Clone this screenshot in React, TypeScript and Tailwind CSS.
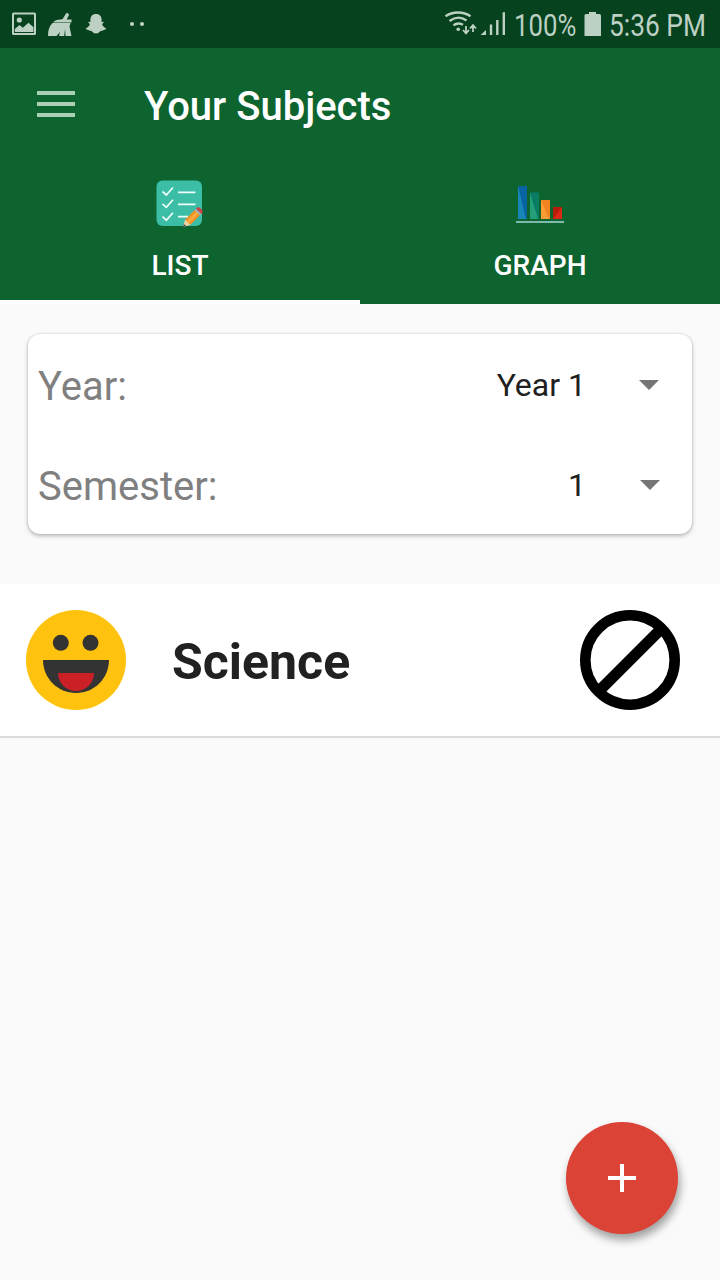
import React from 'react';

function Notifications() {
  return (
    <svg width="160" height="48" viewBox="0 0 160 48" fill="#bcd0c3" aria-hidden="true">
      <path fillRule="evenodd" d="M13.5 12.500h21a1.500 1.500 0 0 1 1.500 1.500v19.500a1.500 1.500 0 0 1-1.500 1.500h-21a1.500 1.500 0 0 1-1.500-1.500V14a1.500 1.500 0 0 1 1.500-1.500ZM14 14.500V33h20V14.500Z" />
      <circle cx="19.300" cy="20" r="2.600" />
      <path d="M14.800 32v-3l4.700-4 3.300 2.700 5.700-5 5 4.500V32Z" />
      <path d="m60.500 19.500 2.200-.5 3-5a1.700 1.700 0 0 1 3 1.600L66.700 19.500h4.800v3H53c1.700-1.800 4-3 7.500-3Z" />
      <path d="M52.500 23h18l-1 3.500 2 9.500h-6l-.5-7-.8 7H59l1-4-3.500 4H48c0-6 1.300-10 4.500-13Z" />
      <path d="M96 14c3.900 0 5.600 2.600 5.600 5.700v2.200l1.700-.2c.8.600.2 1.600-1.300 2.100.5 2 2 3.600 4 4.500.4 1-1.200 1.500-2.600 1.800-.4.900-1.500.6-2.600.8-1.300.2-2.100 2.600-4.800 2.600s-3.500-2.400-4.800-2.600c-1.100-.2-2.200.1-2.600-.8-1.400-.3-3-.8-2.600-1.800 2-.9 3.500-2.500 4-4.500-1.500-.5-2.100-1.500-1.300-2.100l1.700.2v-2.200c0-3.100 1.700-5.700 5.600-5.700Z" />
      <circle cx="132" cy="24" r="2.100" />
      <circle cx="142" cy="24" r="2.100" />
    </svg>
  );
}

function Signals() {
  return (
    <svg width="66" height="48" viewBox="442 0 66 48" fill="none" stroke="#bcd0c3" aria-hidden="true">
      <path d="M445.500 16.300c7-5 18-5 25 0M449.500 21c5.400-4 11.800-4.300 17-.6M453.500 25.300c3-2.200 6.400-2.400 9.500-.5" strokeWidth="2.400" />
      <circle cx="458.200" cy="29.300" r="1.800" fill="#bcd0c3" stroke="none" />
      <path d="M466 26v7m-3-3 3 3.400 3-3.400M473 32v-6.500m-3 3 3-3.400 3 3.400" strokeWidth="1.800" />
      <path d="M486 30v5h-5.500Z" fill="#bcd0c3" stroke="none" />
      <path d="M491 24.500V35M497.300 20V35M503.800 12.300V35" strokeWidth="2.400" />
    </svg>
  );
}

function ListIcon() {
  return (
    <svg width="48" height="48" viewBox="0 0 48 48" aria-hidden="true">
      <rect x="0.500" y="0.500" width="45.500" height="45.500" rx="6" fill="#3cbda6" />
      <path d="m6.500 11.500 3.800 3.500L17 7.500M6.500 23.800l3.800 3.500 6.700-7.500M6.500 36.700l3.800 3.500L17 32.700M22 12.300h17.500M22 24.300h17.500M22 36.700h10" fill="none" stroke="#effffb" strokeWidth="1.700" />
      <path d="m27 47 2.200-7.500 5.300 5.300Z" fill="#f2d2a2" />
      <path d="m27 47 .9-3 2.100 2.100Z" fill="#344451" />
      <path d="m29.200 39.500 9.500-9.500 5.300 5.300-9.500 9.500Z" fill="#f2942a" />
      <path d="m31 41.300 9.500-9.500 1.700 1.700-9.500 9.500Z" fill="#ffae40" />
      <path d="m38.700 30 1.300-1.300 5.300 5.300-1.300 1.300Z" fill="#aab2bd" />
      <path d="m40 28.700.9-.9c2-2 7.300 3.300 5.300 5.300l-.9.900Z" fill="#cf4545" />
    </svg>
  );
}

function GraphIcon() {
  return (
    <svg width="48" height="48" viewBox="0 0 48 48" aria-hidden="true">
      <path d="M2 6h9v33H2Z" fill="#0864a0" />
      <path d="M2 6v33h8Z" fill="#1786b8" />
      <path d="M14 12.500h9V39h-9Z" fill="#087c64" />
      <path d="M14 12.500V39h8Z" fill="#24a078" />
      <path d="M25 20h9v19h-9Z" fill="#ef8420" />
      <path d="M25 20v19h8Z" fill="#fb9c35" />
      <path d="M37 27h9v12h-9Z" fill="#b61c0b" />
      <path d="m46 27-9 12h9Z" fill="#da2817" />
      <path d="M0 41h48v2H0Z" fill="#7fb9ad" />
    </svg>
  );
}

function FilterRow({ label, value }: { label: string; value: string }) {
  return (
    <div className="flex h-[100px] items-center pl-[10px] pr-[32px]">
      <span className="flex-1 pt-1.5 text-[40px] leading-[48px] text-[#808080]">{label}</span>
      <span className="pt-0.5 text-[32px] leading-[40px] text-[#202020]">{value}</span>
      <svg className={value === '1' ? 'ml-[54px]' : 'ml-[53px] mr-px'} width="20" height="12" viewBox="0 0 20 12" aria-hidden="true">
        <path d="M0 2h20L10 12Z" fill="#757575" />
      </svg>
    </div>
  );
}

export default function App() {
  return (
    <div className="relative flex h-[1280px] w-[720px] flex-col overflow-hidden bg-[#fafafa] font-['Roboto',sans-serif]">
      <div className="flex h-12 shrink-0 bg-[#05421d] text-[#bcd0c3]">
        <Notifications />
        <div className="ml-[282px] flex h-12">
          <Signals />
          <div className="ml-[6px] w-[70px] whitespace-nowrap text-[31px] leading-[51px]">
            <span className="inline-block origin-left scale-x-[0.83]">100%</span>
          </div>
          <svg width="18" height="48" viewBox="0 0 18 48" className="shrink-0" aria-hidden="true">
            <path d="M5 12h7v2h3.500a1.500 1.500 0 0 1 1.500 1.500V36H.500V15.500A1.500 1.500 0 0 1 2 14h3Z" fill="#bcd0c3" />
          </svg>
          <div className="ml-[7px] w-[110px] whitespace-nowrap text-[31px] leading-[51px]">
            <span className="inline-block origin-left scale-x-[0.85]">5:36 PM</span>
          </div>
        </div>
      </div>

      <header className="h-64 shrink-0 bg-[#0d642f] text-white">
        <div className="flex h-28 items-center pl-[37px]">
          <button aria-label="Menu" className="mb-px flex w-[38px] flex-col gap-[7px]">
            <span className="h-1 bg-[#a9cfb5]" />
            <span className="h-1 bg-[#a9cfb5]" />
            <span className="h-1 bg-[#a9cfb5]" />
          </button>
          <h1 className="ml-[69px] pt-[5px] text-[40px] font-medium leading-[48px]">Your Subjects</h1>
        </div>
        <div className="grid h-36 grid-cols-2">
          <button className="flex flex-col items-center border-b-4 border-white pt-5 text-[28px] font-medium leading-8">
            <ListIcon />
            <span className="mt-[22px]">LIST</span>
          </button>
          <button className="flex flex-col items-center pt-5 text-[28px] font-medium leading-8">
            <GraphIcon />
            <span className="mt-[22px]">GRAPH</span>
          </button>
        </div>
      </header>

      <section className="mx-7 mt-[30px] h-[200px] shrink-0 rounded-xl bg-white shadow-[0_2px_4px_rgba(0,0,0,0.25),0_0_2px_rgba(0,0,0,0.18)]">
        <FilterRow label="Year:" value="Year 1" />
        <FilterRow label="Semester:" value="1" />
      </section>

      <div className="mt-[50px] flex h-[154px] shrink-0 items-center border-b-2 border-[#dcdcdc] bg-white pl-[26px] pr-10">
        <svg width="100" height="100" viewBox="0 0 100 100" aria-hidden="true">
          <circle cx="50" cy="50" r="50" fill="#ffc20e" />
          <circle cx="34.800" cy="32.800" r="8" fill="#333" />
          <circle cx="64.500" cy="32.800" r="8" fill="#333" />
          <path d="M17 50h66c0 18-14.500 33-33 33S17 68 17 50Z" fill="#333" />
          <path d="M32 63h36c0 10-8 18-18 18s-18-8-18-18Z" fill="#cc2027" />
        </svg>
        <h2 className="ml-[46px] flex-1 pt-1 text-[50px] font-bold leading-[60px] text-[#212121]">Science</h2>
        <svg width="100" height="100" viewBox="0 0 100 100" fill="none" stroke="#000" aria-hidden="true">
          <circle cx="50" cy="50" r="44.700" strokeWidth="10.600" />
          <path d="M19 81 81 19" strokeWidth="11" />
        </svg>
      </div>

      <button aria-label="Add subject" className="absolute left-[566px] top-[1122px] flex size-28 items-center justify-center rounded-full bg-[#da4336] shadow-[2px_6px_9px_rgba(0,0,0,0.36)]">
        <svg width="28" height="28" viewBox="0 0 28 28" aria-hidden="true">
          <path d="M0 14h28M14 0v28" stroke="#fff" strokeWidth="4" />
        </svg>
      </button>
    </div>
  );
}
